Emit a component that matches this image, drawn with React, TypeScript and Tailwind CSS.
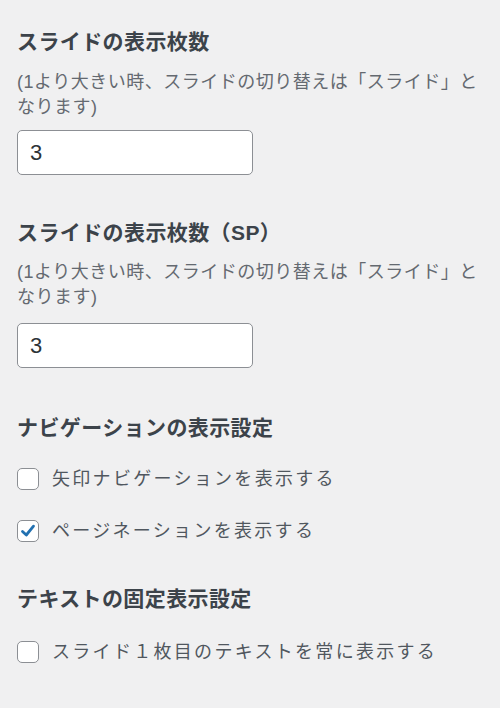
const FONT = "font-['Helvetica_Neue','Liberation_Sans','Noto_Sans_CJK_JP',sans-serif]";

function Heading({ text, className }: { text: string; className: string }) {
  return (
    <h2 className={`text-[21px] leading-[28px] font-bold tracking-[0.4px] text-[#3c434a] ${className}`}>
      {text}
    </h2>
  );
}

function Note({ className }: { className: string }) {
  return (
    <p className={`text-[18px] leading-[25px] tracking-[0.5px] text-[#646970] ${className}`}>
      (1より大きい時、スライドの切り替えは「スライド」となります)
    </p>
  );
}

function NumberInput({ value, className }: { value: string; className: string }) {
  return (
    <div
      className={`w-[236px] h-[45px] bg-white border border-[#8c8f94] rounded-[5px] flex items-center px-3 text-[22px] text-[#2c3338] ${className}`}
    >
      {value}
    </div>
  );
}

function Check({ label, checked, className }: { label: string; checked?: boolean; className: string }) {
  return (
    <label className={`flex items-center gap-[13px] h-[28px] ${className}`}>
      <span className="w-[22px] h-[22px] bg-white border border-[#8c8f94] rounded-[5px] flex items-center justify-center shrink-0">
        {checked && (
          <svg width="16" height="16" viewBox="0 0 16 16">
            <path d="M2.5 8.5 L6.3 12 L13.5 3.2" fill="none" stroke="#2271b1" strokeWidth="2.8" strokeLinecap="round" strokeLinejoin="round" />
          </svg>
        )}
      </span>
      <span className="text-[18px] tracking-[2.3px] text-[#50575e] whitespace-nowrap">{label}</span>
    </label>
  );
}

export default function App() {
  return (
    <main className={`min-h-[708px] w-[500px] bg-[#f0f0f1] pl-[17px] pr-[13px] pt-[28px] ${FONT}`}>
      <Heading text="スライドの表示枚数" className="" />
      <Note className="mt-[14px]" />
      <NumberInput value="3" className="mt-[10px]" />

      <Heading text="スライドの表示枚数（SP）" className="mt-[44px]" />
      <Note className="mt-[13px]" />
      <NumberInput value="3" className="mt-[13px]" />

      <Heading text="ナビゲーションの表示設定" className="mt-[46px]" />
      <Check label="矢印ナビゲーションを表示する" className="mt-[23px]" />
      <Check label="ページネーションを表示する" checked className="mt-[24px]" />

      <Heading text="テキストの固定表示設定" className="mt-[40px]" />
      <Check label="スライド１枚目のテキストを常に表示する" className="mt-[25px]" />
    </main>
  );
}
